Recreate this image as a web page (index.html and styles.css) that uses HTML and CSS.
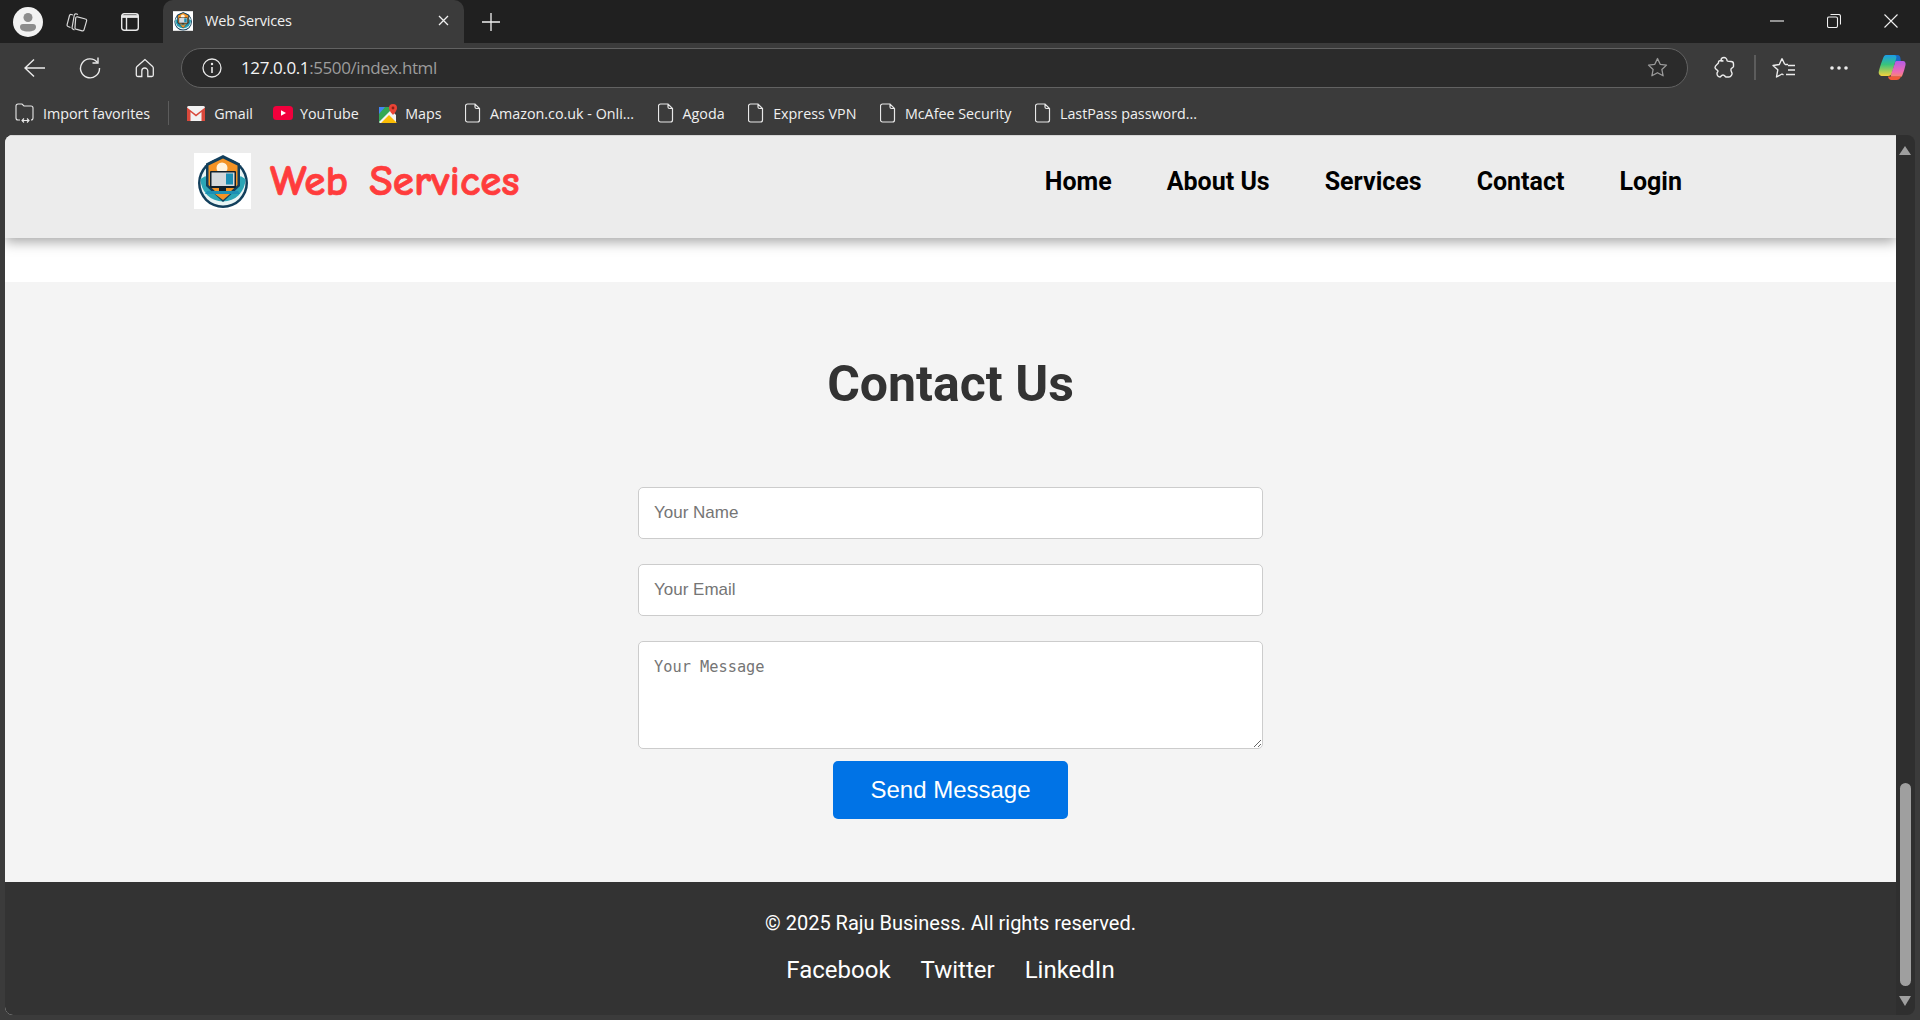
FILE: index.html
```html
<!DOCTYPE html>
<html lang="en">
<head>
<meta charset="utf-8">
<title>Web Services</title>
<link rel="stylesheet" href="styles.css">
</head>
<body>
<svg class="defs" width="0" height="0" aria-hidden="true">
  <defs>
    <symbol id="logo" viewBox="0 0 57 56">
      <rect width="57" height="56" fill="#fff"/>
      <circle cx="29" cy="30" r="25" fill="#123f5c"/>
      <circle cx="29" cy="30" r="22.5" fill="#e8f4f4"/>
      <path d="M6.500 26a22.500 22.500 0 0 0 45 0l-5-3a18 18 0 0 1-35 0z" fill="#2ba5b5"/>
      <path d="M29 2 46 10.500V33L29 49 12 33V10.500z" fill="#123f5c"/>
      <path d="M29 5.500 43.500 12.500V32L29 45.500 14.500 32V12.500z" fill="#f39325"/>
      <circle cx="28" cy="15" r="5.500" fill="#fff3dd"/>
      <rect x="16" y="18" width="26" height="17" rx="1" fill="#10202c"/>
      <rect x="17.500" y="19.500" width="23" height="13.500" fill="#d5d9dc"/>
      <rect x="32" y="20.500" width="7" height="11" fill="#1c8fb4"/>
      <rect x="25" y="35" width="7" height="3" fill="#10202c"/>
      <path d="M13 38h31l2 3H11z" fill="#1c8fb4"/>
      <path d="M21 41h15l-7 6z" fill="#f39325"/>
    </symbol>
    <symbol id="doc" viewBox="0 0 16 20">
      <path d="M2.500 1H10l4.500 4.500V17a2 2 0 0 1-2 2h-10a2 2 0 0 1-2-2V3a2 2 0 0 1 2-2zM10 1v3a1.500 1.500 0 0 0 1.500 1.500h3" fill="none" stroke="#e8e8e8" stroke-width="1.200"/>
    </symbol>
    <linearGradient id="cpA" x1="0" y1="0" x2="0" y2="1">
      <stop offset="0" stop-color="#1b9de8"/>
      <stop offset=".45" stop-color="#38c47c"/>
      <stop offset="1" stop-color="#f6d13c"/>
    </linearGradient>
    <linearGradient id="cpB" x1="0" y1="0" x2="0" y2="1">
      <stop offset="0" stop-color="#b45be8"/>
      <stop offset=".7" stop-color="#ef6cb0"/>
      <stop offset="1" stop-color="#f78a6d"/>
    </linearGradient>
  </defs>
</svg>

<div class="tabstrip">
  <span class="profile">
    <svg width="30" height="30" viewBox="0 0 30 30"><circle cx="15" cy="15" r="15" fill="#f2f2f2"/><circle cx="15" cy="10.500" r="4.500" fill="#8c8c8c"/><path d="M7 20a3 3 0 0 1 3-3h10a3 3 0 0 1 3 3c0 3-3 4.500-8 4.500S7 23 7 20z" fill="#8c8c8c"/></svg>
  </span>
  <span class="strip-btn">
    <svg width="22" height="21" viewBox="0 0 22 21" fill="none" stroke="#d8d8d8" stroke-width="1.200"><path d="M4.500 16.500 2 15.500a1.500 1.500 0 0 1-.9-1.800L3.500 4.500A1.500 1.500 0 0 1 5.300 3.500L7 4"/><path d="M8.500 19 6.800 18a1.500 1.500 0 0 1-.7-1.700L8.300 4A1.500 1.500 0 0 1 10 2.800L12 3.500"/><path d="M11.500 5.800 19.500 8a1.500 1.500 0 0 1 1.100 1.900L18 18.800a1.500 1.500 0 0 1-1.900 1L10 18.200a1.500 1.500 0 0 1-1-1.900L9.700 6.900a1.500 1.500 0 0 1 1.800-1.100z"/></svg>
  </span>
  <span class="strip-btn narrow">
    <svg width="18" height="18" viewBox="0 0 18 18" fill="none" stroke="#e8e8e8" stroke-width="1.400"><rect x=".7" y=".7" width="16.600" height="16.600" rx="2.500"/><path d="M.7 3.500h16.600" stroke-width="2.800"/><path d="M5.500 4v13"/></svg>
  </span>
  <div class="tab">
    <svg class="favicon" width="20" height="20"><use href="#logo"/></svg>
    <span class="tab-title">Web Services</span>
    <svg class="tab-close" width="11" height="11" viewBox="0 0 11 11" stroke="#f0f0f0" stroke-width="1.300"><path d="M1 1l9 9M10 1l-9 9"/></svg>
  </div>
  <svg class="new-tab" width="18" height="18" viewBox="0 0 18 18" stroke="#f0f0f0" stroke-width="1.300"><path d="M9 0v18M0 9h18"/></svg>
  <div class="win-controls">
    <svg width="14" height="14" viewBox="0 0 14 14" stroke="#f0f0f0" stroke-width="1.100"><path d="M0 7h14"/></svg>
    <svg width="14" height="14" viewBox="0 0 14 14" fill="none" stroke="#f0f0f0" stroke-width="1.100"><rect x=".5" y="3" width="10" height="10.500" rx="1.500"/><path d="M3.500 .5h8a2 2 0 0 1 2 2v8"/></svg>
    <svg width="14" height="14" viewBox="0 0 14 14" stroke="#f0f0f0" stroke-width="1.100"><path d="M.5.500l13 13M13.500.500l-13 13"/></svg>
  </div>
</div>

<div class="toolbar">
  <span class="tool">
    <svg width="22" height="20" viewBox="0 0 22 20" fill="none" stroke="#ececec" stroke-width="1.400"><path d="M1 10h20M10 1.500 1 10l9 8.500"/></svg>
  </span>
  <span class="tool">
    <svg width="22" height="22" viewBox="0 0 22 22" fill="none" stroke="#ececec" stroke-width="1.400"><path d="M18.500 5.500A9.500 9.500 0 1 0 20.500 11"/><path d="M19 .500v5.500h-5.500"/></svg>
  </span>
  <span class="tool">
    <svg width="20" height="20" viewBox="0 0 20 20" fill="none" stroke="#ececec" stroke-width="1.300"><path d="M10 1.500 2 8.500a2 2 0 0 0-.7 1.500v7a1.500 1.500 0 0 0 1.500 1.500h4V13a3 3 0 0 1 6 0v5.500h4a1.500 1.500 0 0 0 1.500-1.500v-7a2 2 0 0 0-.7-1.500z"/></svg>
  </span>
  <div class="omnibox">
    <svg class="info" width="20" height="20" viewBox="0 0 20 20" fill="none" stroke="#e8e8e8" stroke-width="1.300"><circle cx="10" cy="10" r="9"/><path d="M10 9v6" stroke-width="1.600"/><circle cx="10" cy="6" r=".6" stroke-width="1.200"/></svg>
    <span class="url"><span class="url-host">127.0.0.1</span>:5500/index.html</span>
    <svg class="star" width="21" height="21" viewBox="0 0 21 21" fill="none" stroke="#9a9a9a" stroke-width="1.300" stroke-linejoin="round"><path d="M10.500 1.500l2.700 5.800 6.300.8-4.600 4.400 1.200 6.300-5.600-3.100-5.600 3.100 1.200-6.300L1.500 8.100l6.300-.8z"/></svg>
  </div>
  <span class="tool tool-first">
    <svg width="22" height="24" viewBox="0 0 22 24" fill="none" stroke="#ececec" stroke-width="1.400" stroke-linejoin="round"><path d="M8 4.500a3 3 0 0 1 6 0c0 1 2 1 4 1 1.500 0 2.500 1 2.500 2.500v2.500c0 1-2 1-2.500 2.500s.5 3 1 4-1 4-3 4h-3c-1 0-1-2-3-2s-2 2-3 2c-2 0-3-2-3-3.500 0-1.500 1-1.500 1-2.500s-3-1.500-3-3.500 2-3 3-4 0-1.500 1-2.500 2 .5 4 0z"/></svg>
  </span>
  <span class="tool-sep"></span>
  <span class="tool">
    <svg width="24" height="24" viewBox="0 0 24 24" fill="none" stroke="#ececec" stroke-width="1.400" stroke-linejoin="round"><path d="M13 8.500h3M10 2.500l-2.700 6L1 9.500l4.800 4.300L4.500 21l5.500-3 1.500.8M10 2.500l2.800 6"/><path d="M16 9.500h7M16 14h7M14 18.500h9" stroke-width="1.300"/></svg>
  </span>
  <span class="tool">
    <svg width="18" height="4" viewBox="0 0 18 4" fill="#ececec"><circle cx="2" cy="2" r="1.800"/><circle cx="9" cy="2" r="1.800"/><circle cx="16" cy="2" r="1.800"/></svg>
  </span>
  <span class="tool copilot">
    <svg width="28" height="27" viewBox="0 0 28 27"><path d="M14.500 1h5c1.800 0 2.800 1.500 3 3.500L23 9H15z" fill="#1769c4"/><path d="M8 1h8c2 0 2.800 1.400 2.300 3L14 19c-.6 2-2 3-4 3H4.500C2 22 .2 20 .8 17.500 1.800 13.500 3.300 8.500 5 4.500 5.800 2.500 6.500 1 8 1z" fill="url(#cpA)"/><path d="M18.500 7h6.500c2 0 3 1.700 2.500 4-.6 3-1.800 6.700-3 10-.3.700-.6 1.300-1 1.800H13c-.3-.6-.2-1.200 0-2l4-12c.3-1.100.7-1.800 1.500-1.800z" fill="url(#cpB)"/><path d="M10 22.500h13c-1 2.500-2.500 3.500-4.500 3.500h-5c-2 0-3.200-1.500-3.500-3.500z" fill="#f2593a"/></svg>
  </span>
</div>

<nav class="bookmarks">
  <span class="bm bm-import">
    <svg width="20" height="20" viewBox="0 0 20 20" fill="none" stroke="#e8e8e8" stroke-width="1.100"><path d="M5 17H3a2 2 0 0 1-2-2V3a2 2 0 0 1 2-2h4l2 2h7a2 2 0 0 1 2 2v10a2 2 0 0 1-2 2"/><path d="M7 17.500h7M9 15.500l-2 2 2 2M12 15.500l2 2-2 2"/></svg>
    Import favorites
  </span>
  <span class="bm-sep"></span>
  <span class="bm bm-gmail">
    <svg width="18" height="15" viewBox="0 0 18 15"><rect width="18" height="15" rx="1.500" fill="#f2f2f2"/><path d="M0 1.500 9 8.500 18 1.500V15h-3.500V6L9 10.500 3.500 6V15H0z" fill="#d9483b"/></svg>
    Gmail
  </span>
  <span class="bm bm-youtube">
    <svg width="20" height="14" viewBox="0 0 20 14"><rect width="20" height="14" rx="3.500" fill="#f2003c"/><path d="M8 4.200v5.600L13 7z" fill="#fff"/></svg>
    YouTube
  </span>
  <span class="bm bm-maps">
    <svg width="18" height="19" viewBox="0 0 18 19"><path d="M0 3h11v16H1a1 1 0 0 1-1-1z" fill="#34a853"/><path d="M0 3h6L0 10z" fill="#4285f4"/><path d="M0 18 12 6l5 5v7a1 1 0 0 1-1 1H1z" fill="#f4f4f4"/><path d="M2 19 10 11l8 8z" fill="#fbbc04"/><path d="M14 0a4 4 0 0 1 4 4c0 3-4 7-4 7s-4-4-4-7a4 4 0 0 1 4-4z" fill="#ea4335"/><circle cx="14" cy="4" r="1.400" fill="#8f1f17"/></svg>
    Maps
  </span>
  <span class="bm"><svg width="16" height="20"><use href="#doc"/></svg>Amazon.co.uk - Onli...</span>
  <span class="bm"><svg width="16" height="20"><use href="#doc"/></svg>Agoda</span>
  <span class="bm"><svg width="16" height="20"><use href="#doc"/></svg>Express VPN</span>
  <span class="bm"><svg width="16" height="20"><use href="#doc"/></svg>McAfee Security</span>
  <span class="bm"><svg width="16" height="20"><use href="#doc"/></svg>LastPass password...</span>
</nav>

<div class="viewport">
  <div class="page">
    <header class="site-header">
      <a class="brand" href="#">
        <svg class="brand-logo" width="57" height="56"><use href="#logo"/></svg>
        <span class="brand-name">Web Services</span>
      </a>
      <ul class="site-nav">
        <li><a href="#">Home</a></li>
        <li><a href="#">About Us</a></li>
        <li><a href="#">Services</a></li>
        <li><a href="#">Contact</a></li>
        <li><a href="#">Login</a></li>
      </ul>
    </header>
    <main class="contact">
      <h1 class="contact-title">Contact Us</h1>
      <form class="contact-form">
        <input class="field" type="text" placeholder="Your Name">
        <input class="field" type="email" placeholder="Your Email">
        <textarea class="field field-area" placeholder="Your Message"></textarea>
        <button class="send" type="button">Send Message</button>
      </form>
    </main>
    <footer class="site-footer">
      <p class="copyright">© 2025 Raju Business. All rights reserved.</p>
      <div class="social">
        <a href="#">Facebook</a>
        <a href="#">Twitter</a>
        <a href="#">LinkedIn</a>
      </div>
    </footer>
  </div>
  <div class="scrollbar">
    <span class="arrow-up"></span>
    <span class="thumb"></span>
    <span class="arrow-down"></span>
  </div>
</div>
</body>
</html>
```

FILE: styles.css
```css
* { box-sizing: border-box; }
html, body { margin: 0; height: 100%; }
body {
  height: 1020px;
  overflow: hidden;
  display: flex;
  flex-direction: column;
  background: #3b3b3b;
  font-family: Roboto, sans-serif;
}
.defs { position: absolute; }
svg { display: block; flex: none; }

/* Browser tab strip */
.tabstrip {
  height: 43px;
  flex: none;
  display: flex;
  align-items: center;
  background: #202020;
  padding-left: 13px;
}
.profile { width: 30px; }
.strip-btn { width: 53px; display: flex; justify-content: center; margin-left: 7px; margin-right: -1px; }
.strip-btn.narrow { width: 18px; margin-left: 19px; margin-right: 0; }
.tab {
  width: 301px;
  height: 43px;
  margin-left: 24px;
  display: flex;
  align-items: center;
  padding: 0 15px 2px 10px;
  background: #3b3b3b;
  border-radius: 10px 10px 0 0;
  color: #f0f0f0;
}
.tab-title { margin-left: 12px; flex: 1; font-family: "Open Sans", sans-serif; font-size: 14.500px; letter-spacing: -.2px; }
.new-tab { margin-left: 18px; }
.win-controls {
  margin-left: auto;
  display: flex;
  gap: 43px;
  padding-right: 22px;
  padding-bottom: 1px;
}

/* Browser toolbar */
.toolbar {
  height: 45px;
  flex: none;
  display: flex;
  align-items: center;
  padding: 4px 0 0 7px;
  background: #3b3b3b;
}
.tool { width: 55px; height: 24px; display: flex; align-items: center; justify-content: center; }
.tool-first { margin-left: 8px; }
.tool-sep { width: 2px; height: 25px; background: #5c5c5c; margin-left: 3px; }
.copilot { width: 52px; }
.omnibox {
  width: 1507px;
  height: 40px;
  margin-left: 9px;
  display: flex;
  align-items: center;
  padding: 0 19px 0 20px;
  background: #2b2b2b;
  border: 1.500px solid #626262;
  border-radius: 20px;
}
.url { margin-left: 19px; flex: 1; font-size: 17px; color: #9c9c9c; font-family: "Open Sans", sans-serif; letter-spacing: -.4px; }
.url-host { color: #f4f4f4; }

/* Bookmarks */
.bookmarks {
  height: 47px;
  flex: none;
  display: flex;
  align-items: center;
  padding: 3px 0 0 15px;
  background: #3b3b3b;
  color: #f0f0f0;
  font-family: "Open Sans", sans-serif;
  font-size: 14.300px;
}
.bm { display: flex; align-items: center; gap: 9px; margin-right: 23.500px; white-space: nowrap; }
.bm-import { gap: 8px; margin-right: 18px; }
.bm-sep { width: 1px; height: 24px; background: #5c5c5c; margin-right: 18px; }
.bm-gmail { margin-right: 20px; }
.bm-youtube { gap: 7px; margin-right: 20.500px; }
.bm-maps { gap: 8px; }

/* Page viewport */
.viewport {
  flex: none;
  height: 880px;
  padding: 0 5px;
  display: flex;
}
.page {
  width: 1891px;
  display: flex;
  flex-direction: column;
  background: #fff;
  border-radius: 8px 0 0 8px;
  overflow: hidden;
}
.site-header {
  height: 103px;
  flex: none;
  display: flex;
  align-items: center;
  justify-content: space-between;
  padding: 0 214px 12px 189px;
  background: #ececec;
  border-top: 1px solid #d6d6d6;
  box-shadow: 0 4px 12px rgba(0, 0, 0, .35);
  position: relative;
}
.brand { display: flex; align-items: center; gap: 19px; text-decoration: none; }
.brand-name {
  font-family: "Comic Sans MS", "Comic Neue", cursive;
  font-weight: 700;
  font-size: 43px;
  color: #ff3c3c;
  word-spacing: 6px;
  -webkit-text-stroke: .7px #ff3c3c;
}
.site-nav { list-style: none; display: flex; gap: 55px; margin: 0; padding: 0; }
.site-nav a { color: #000; font-weight: 700; font-size: 25px; text-decoration: none; }

.contact {
  margin-top: 44px;
  height: 600px;
  flex: none;
  background: #f4f4f4;
  display: flex;
  flex-direction: column;
  align-items: center;
}
.contact-title {
  margin: 73px 0 0;
  font-size: 50px;
  font-weight: 700;
  line-height: 58px;
  color: #333;
}
.contact-form {
  width: 625px;
  margin-top: 74px;
  display: flex;
  flex-direction: column;
  align-items: center;
}
.field {
  display: block;
  width: 100%;
  height: 52px;
  margin-bottom: 25px;
  padding: 0 15px;
  background: #fff;
  border: 1px solid #ccc;
  border-radius: 5px;
  font-family: "Liberation Sans", Arial, sans-serif;
  font-size: 17px;
}
.field::placeholder { color: #757575; opacity: 1; }
.field-area {
  height: 108px;
  margin-bottom: 12px;
  padding: 16px 15px;
  font-family: "DejaVu Sans Mono", monospace;
  font-size: 15.300px;
}
.send {
  width: 235px;
  height: 58px;
  border: 0;
  border-radius: 5px;
  background: #0073e6;
  color: #fff;
  font-family: "Liberation Sans", Arial, sans-serif;
  font-size: 24px;
}
.site-footer {
  flex: 1;
  background: #333;
  color: #fff;
  display: flex;
  flex-direction: column;
  align-items: center;
  padding-top: 29px;
}
.copyright { margin: 0; font-size: 20px; line-height: 24px; }
.social { display: flex; gap: 30px; margin-top: 21px; }
.social a { color: #fff; font-size: 24px; line-height: 28px; text-decoration: none; }

/* Scrollbar */
.scrollbar {
  width: 19px;
  position: relative;
  background: #2f2f2f;
  border-radius: 0 8px 8px 0;
}
.thumb {
  position: absolute;
  left: 4px;
  top: 648px;
  width: 11px;
  height: 203px;
  border-radius: 6px;
  background: #9f9f9f;
}
.arrow-up, .arrow-down {
  position: absolute;
  left: 3px;
  width: 0;
  height: 0;
  border-left: 6.500px solid transparent;
  border-right: 6.500px solid transparent;
}
.arrow-up { top: 11px; border-bottom: 9px solid #9f9f9f; }
.arrow-down { top: 861px; border-top: 10px solid #9f9f9f; }
```
